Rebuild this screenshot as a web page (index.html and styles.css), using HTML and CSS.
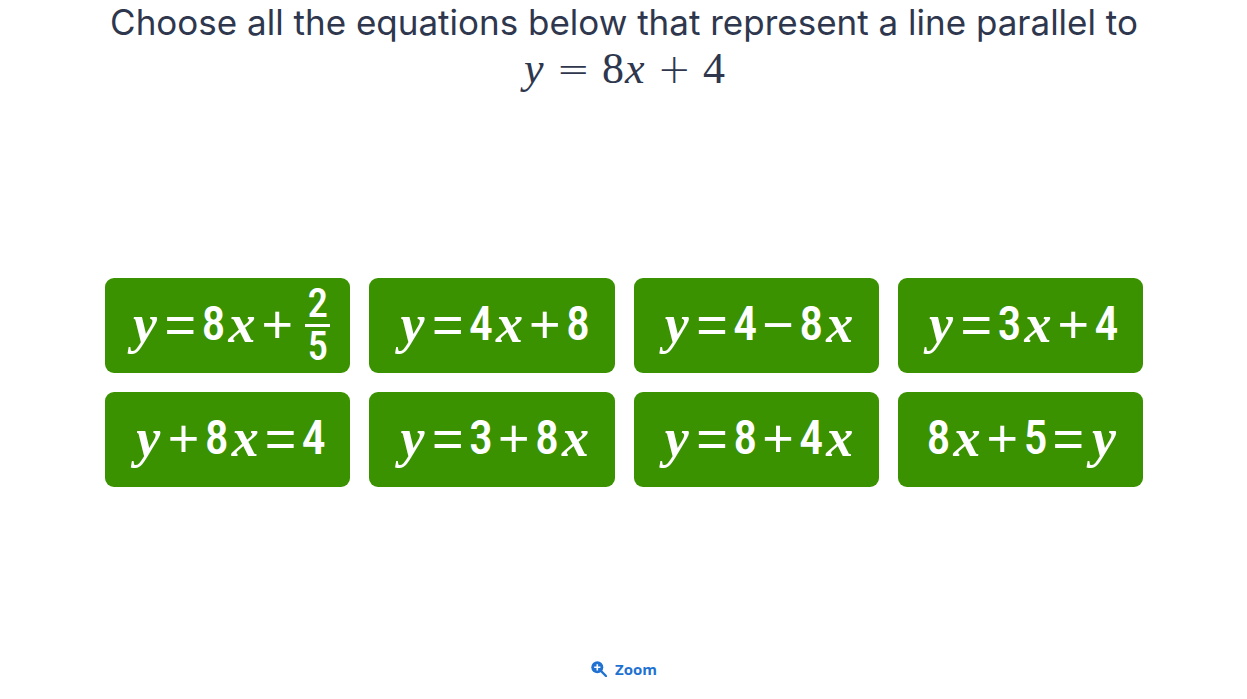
FILE: index.html
```html
<!DOCTYPE html>
<html lang="en">
<head>
<meta charset="utf-8">
<title>Parallel lines</title>
<link rel="stylesheet" href="styles.css">
</head>
<body>
<main class="question">
  <h1 class="prompt">Choose all the equations below that represent a line parallel to
    <span class="formula"><i>y</i><span class="rel">=</span><span>8</span><i>x</i><span class="rel">+</span><span>4</span></span>
  </h1>
  <div class="choices">
    <button class="choice" type="button"><i class="var">y</i><span class="op">=</span><span class="num">8</span><i class="var">x</i><span class="op">+</span><span class="fraction"><span class="top">2</span><span class="bottom">5</span></span></button>
    <button class="choice" type="button"><i class="var">y</i><span class="op">=</span><span class="num">4</span><i class="var">x</i><span class="op">+</span><span class="num">8</span></button>
    <button class="choice" type="button"><i class="var">y</i><span class="op">=</span><span class="num">4</span><span class="op">−</span><span class="num">8</span><i class="var">x</i></button>
    <button class="choice" type="button"><i class="var">y</i><span class="op">=</span><span class="num">3</span><i class="var">x</i><span class="op">+</span><span class="num">4</span></button>
    <button class="choice" type="button"><i class="var">y</i><span class="op">+</span><span class="num">8</span><i class="var">x</i><span class="op">=</span><span class="num">4</span></button>
    <button class="choice" type="button"><i class="var">y</i><span class="op">=</span><span class="num">3</span><span class="op">+</span><span class="num">8</span><i class="var">x</i></button>
    <button class="choice" type="button"><i class="var">y</i><span class="op">=</span><span class="num">8</span><span class="op">+</span><span class="num">4</span><i class="var">x</i></button>
    <button class="choice" type="button"><span class="num">8</span><i class="var">x</i><span class="op">+</span><span class="num">5</span><span class="op">=</span><i class="var">y</i></button>
  </div>
  <button class="zoom" type="button">
    <svg class="zoom-icon" viewBox="0 0 16 16" aria-hidden="true"><circle cx="6.3" cy="6.3" r="6" fill="currentColor"/><path d="M10 10 15 15" stroke="currentColor" stroke-width="2.4" stroke-linecap="round"/><path d="M6.3 3.2v6.2M3.2 6.3h6.2" stroke="#fff" stroke-width="1.6"/></svg>
    Zoom
  </button>
</main>
</body>
</html>
```
FILE: styles.css
```css
* { box-sizing: border-box; }
body { margin: 0; background: #fff; color: #2e374d; font-family: "Inter", sans-serif; }
.question { min-height: 100vh; display: flex; flex-direction: column; align-items: center; padding: 0 104px 16px 105px; }
.prompt { margin: 0; font-size: 35px; font-weight: 400; line-height: 44px; text-align: center; }
.formula { display: flex; justify-content: center; align-items: center; font-family: "Liberation Serif", serif; font-size: 44px; line-height: 50px; }
.formula i { padding: 0 1px; }
.rel { padding: 0 12px; font-family: "DejaVu Sans", sans-serif; font-size: 40px; font-weight: 200; }
.choices { width: 100%; margin-top: 184px; display: grid; grid-template-columns: repeat(4, 1fr); gap: 19px; }
.choice { min-height: 95px; border: 0; border-radius: 9px; padding: 0 0 3px 4px; background: #3a9200; color: #fff; display: flex; align-items: center; justify-content: center; font-family: "Roboto Condensed", "DejaVu Sans Condensed", sans-serif; font-size: 48px; font-weight: 500; line-height: 46px; cursor: pointer; }
.var { width: 31px; text-align: center; font-family: "Liberation Serif", serif; font-size: 54px; font-weight: 700; }
.op { width: 40px; display: flex; justify-content: center; font-family: "Liberation Sans", sans-serif; font-size: 54px; font-weight: 400; }
.num { width: 26px; display: flex; justify-content: center; }
.fraction { display: grid; margin-left: 8px; font-size: 41px; line-height: 38px; text-align: center; }
.top { border-bottom: 3px solid #fff; padding: 0 2px 2px; }
.zoom { margin-top: auto; border: 0; background: none; padding: 4px; display: flex; align-items: center; gap: 8px; color: #1f72d2; font-family: "Open Sans", sans-serif; font-size: 15px; font-weight: 700; line-height: 20px; cursor: pointer; }
.zoom-icon { width: 16px; height: 16px; }
```
